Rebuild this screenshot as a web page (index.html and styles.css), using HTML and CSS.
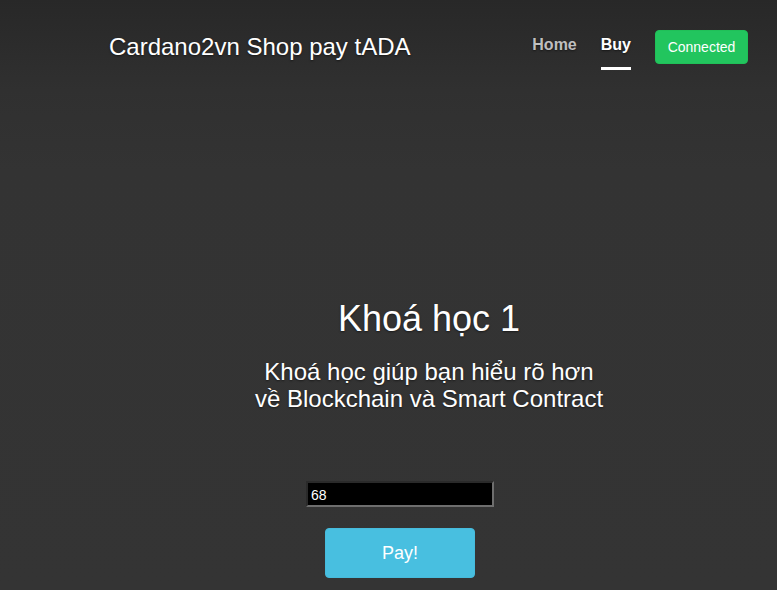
FILE: index.html
```html
<!DOCTYPE html>
<html lang="vi">
<head>
<meta charset="utf-8">
<title>Cardano2vn Shop pay tADA</title>
<link rel="stylesheet" href="styles.css">
</head>
<body>
<header class="header">
  <div class="brand">Cardano2vn Shop pay tADA</div>
  <nav class="nav">
    <a class="nav-link" href="#">Home</a>
    <a class="nav-link active" href="#">Buy</a>
  </nav>
  <button class="btn-connected">Connected</button>
</header>
<main class="main">
  <section class="intro">
    <h1 class="title">Khoá học 1</h1>
    <p class="lead">Khoá học giúp bạn hiểu rõ hơn<br>về Blockchain và Smart Contract</p>
  </section>
  <form class="pay-form">
    <input class="amount" type="text" value="68">
    <button class="btn-pay" type="button">Pay!</button>
  </form>
</main>
</body>
</html>
```
FILE: styles.css
```css
html, body {
  margin: 0;
  padding: 0;
}
body {
  min-height: 590px;
  background: linear-gradient(to bottom, #282828 0px, #303030 90px, #333333 170px, #343434 590px);
  color: #fff;
  font-family: "Liberation Sans", Arial, sans-serif;
  text-shadow: 0 1px 2px rgba(0, 0, 0, 0.5);
}
.header {
  display: flex;
  align-items: flex-start;
  padding: 30px 29px 0 109px;
}
.brand {
  font-size: 24px;
  line-height: 34px;
}
.nav {
  margin-left: auto;
  margin-top: 5px;
  display: flex;
  gap: 24px;
}
.nav-link {
  font-size: 16px;
  font-weight: bold;
  line-height: 20px;
  color: rgba(255, 255, 255, 0.72);
  text-decoration: none;
  padding-bottom: 12px;
  border-bottom: 3px solid transparent;
}
.nav-link.active {
  color: #fff;
  border-bottom-color: #fff;
}
.btn-connected {
  margin-left: 24px;
  width: 93px;
  height: 34px;
  background: #22c55e;
  border: 1px solid #20c058;
  border-radius: 4px;
  color: #fff;
  font-family: "Liberation Sans", Arial, sans-serif;
  font-size: 14px;
  padding: 0;
  text-shadow: none;
}
.main {
  display: flex;
  flex-direction: column;
}
.intro {
  padding-left: 81px;
  text-align: center;
  margin-top: 227px;
}
.title {
  margin: 0;
  font-size: 36px;
  font-weight: normal;
  line-height: 43px;
}
.lead {
  margin: 18px 0 0;
  font-size: 24px;
  line-height: 27px;
}
.pay-form {
  padding-left: 23px;
  display: flex;
  flex-direction: column;
  align-items: center;
  margin-top: 69px;
}
.amount {
  box-sizing: border-box;
  width: 188px;
  height: 26px;
  margin: 0;
  padding: 1px 3px 0;
  background: #000;
  color: #fff;
  border: 2px solid;
  border-color: #2a2a2a #6e6e6e #6e6e6e #2a2a2a;
  font-family: "Liberation Sans", Arial, sans-serif;
  font-size: 14px;
}
.btn-pay {
  margin-top: 21px;
  width: 150px;
  height: 50px;
  background: #48bfe0;
  border: 1px solid #46bbdc;
  border-radius: 4px;
  color: #fff;
  font-family: "Liberation Sans", Arial, sans-serif;
  font-size: 18px;
  padding: 0;
}
```
